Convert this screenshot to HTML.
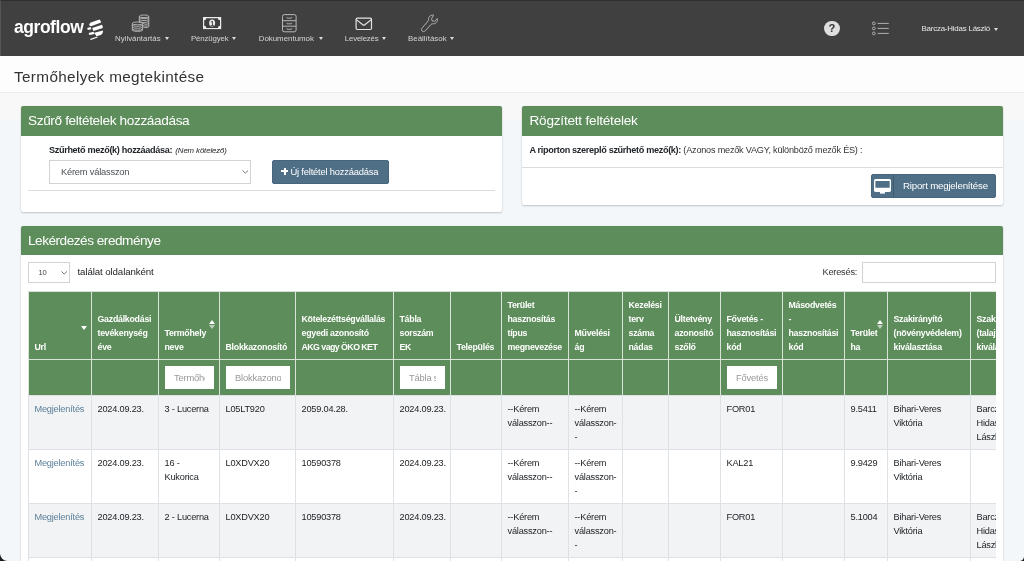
<!DOCTYPE html>
<html lang="hu">
<head>
<meta charset="utf-8">
<title>Termőhelyek megtekintése</title>
<style>
*{box-sizing:border-box;margin:0;padding:0}
html,body{width:1024px;height:561px;overflow:hidden;background:#1c1c1c}
body{font-family:"Liberation Sans",sans-serif;font-size:9.2px;letter-spacing:-.2px;color:#212529;position:relative}
#win{will-change:transform;position:absolute;left:0;top:0;width:1024px;height:561px;background:#f3f7fa;border-radius:0 0 4.5px 7.5px;overflow:hidden}
#nav{position:absolute;left:0;top:0;width:1024px;height:56px;background:#404040;border-top:1px solid #2e2e2e;border-left:1px solid #555}
#nav .it{position:absolute;top:33px;height:10px;line-height:10px;font-size:7.9px;letter-spacing:0;color:#d4d4d4;white-space:nowrap}
#nav .car{position:absolute;width:0;height:0;border-left:2.7px solid transparent;border-right:2.7px solid transparent;border-top:3px solid #dcdcdc;margin-left:-.3px}
#nav svg{position:absolute;overflow:visible}
#logo{position:absolute;left:13px;top:14px;font-size:17.5px;font-weight:700;letter-spacing:-.45px;color:#fff;line-height:24px;white-space:nowrap}
#user{position:absolute;left:920.5px;top:22.2px;font-size:7.9px;letter-spacing:-.2px;color:#e8e8e8;line-height:12px;white-space:nowrap}
#title{position:absolute;left:0;top:56px;width:1024px;height:37px;background:#fdfdfd;border-bottom:1px solid #ebebeb}
#title h1{position:absolute;left:14px;top:12.2px;font-size:15.3px;letter-spacing:.35px;font-weight:400;color:#333;line-height:18px;white-space:nowrap}
#fade{position:absolute;left:0;top:93px;width:1024px;height:27px;background:linear-gradient(#f8f8f8 0,#f8f8f8 25.500px,#f3f7fa 27px)}
.panel{position:absolute;background:#fff;border-radius:2px;box-shadow:0 0 1px rgba(0,0,0,.125),0 1px 2px rgba(0,0,0,.2)}
.panel .hd{position:absolute;left:0;top:0;right:0;height:29.5px;background:#5c8d5a;border-radius:2px 2px 0 0;color:#fff;font-size:13.6px;letter-spacing:-.35px;line-height:29px;padding-left:7.5px;white-space:nowrap}
.abs{position:absolute;white-space:nowrap}
.btn{position:absolute;background:#4f6f86;border:1px solid #48667b;border-radius:2px;color:#fff;white-space:nowrap}
.sel,.inp{position:absolute;background:#fff;border:1px solid #d3d3d3;border-radius:0;color:#495057;white-space:nowrap}
.chev{position:absolute;width:4.5px;height:4.5px;border-right:1px solid #555;border-bottom:1px solid #555;transform:rotate(45deg)}

#tw{position:absolute;left:7px;top:64.500px;width:968px;height:340px;overflow:hidden}
#tb{border-collapse:separate;border-spacing:0;table-layout:fixed;width:1014px}
#tb th,#tb td{border-left:1px solid #dee2e6;border-top:1px solid #dee2e6;padding:6px 0 5.5px 5.5px;line-height:14px;text-align:left;white-space:nowrap;overflow:hidden;position:relative}
#tb th{background:#5c8d5a;color:#fff;font-weight:700;font-size:8.8px;letter-spacing:-.25px;height:67px;padding-bottom:5px;vertical-align:bottom;border-color:#d9e3d8}
#tb tr.f td{background:#5c8d5a;height:36.500px;padding:6px 5px 0 5.500px;border-top:1.5px solid #d9e3d8;border-left-color:#d9e3d8;vertical-align:top}
#tb tbody td{height:54px;padding-top:6.400px;padding-bottom:4.100px;vertical-align:top}
#tb tbody tr:nth-child(odd) td{background:#f2f3f4}
#tb tbody tr:nth-child(even) td{background:#fff}
#tb a{color:#5b7f98}
.fi{height:23px;background:#fff;border-radius:0;overflow:hidden;padding:0 9px 0 9.500px;line-height:23px;color:#999;font-size:9.400px}
.fi span{display:block;overflow:hidden}
.sd,.sb{position:absolute;right:4px}
.sd{top:34.500px;width:0;height:0;border-left:3px solid transparent;border-right:3px solid transparent;border-top:4.200px solid #fff}
.sb{top:28.400px;width:6px;height:10px;right:4px}
.sb:before,.sb:after{content:"";position:absolute;left:0;width:0;height:0;border-left:3px solid transparent;border-right:3px solid transparent}
.sb:before{top:0;border-bottom:4.600px solid #fff}
.sb:after{top:5.200px;border-top:4.600px solid rgba(255,255,255,.6)}
</style>
</head>
<body>
<div id="win">
<div id="nav">
<div id="logo">agroflow</div>

<svg id="lg" style="left:-1px;top:-1px" width="110" height="56" viewBox="0 0 110 56"><g fill="#fff"><path d="M89.100 25.300 C89.300 24 89.800 23.100 90.800 22.500 L99.500 19.600 C100.300 20.400 100.900 21.400 101.200 22.600 L91 26.300 Z"/><path d="M92.100 27.900 L102 24.700 C102.600 25.700 102.800 26.800 102.800 27.900 L93.500 30.900 Z"/><path d="M87.200 28.100 L90.700 27 L91.300 29.200 L87.800 30.100 Z"/><path d="M94.300 32.700 L103.100 30.400 C103 31.600 102.700 32.600 102.300 33.400 C101.600 34.400 100.800 35 100 35.300 L96.400 36.200 Z"/><path d="M88.700 33 L93.500 31.800 L94.700 34 L89.300 35.100 Z"/><path d="M90 39.100 L97.200 36.600 L97.600 37.500 L90.800 40.100 Z"/><path d="M90.500 36.500 L95 35.300 L95.300 36 L90.800 37.200Z" opacity=".0"/></g></svg>

<svg style="left:-1px;top:-1px" width="160" height="40" viewBox="0 0 160 40" fill="none" stroke="#c2c2c2" stroke-width=".85"><ellipse cx="144.05" cy="16.3" rx="4.75" ry="1.3"/><path d="M139.30 16.300V22.300M148.80 16.300V26.600"/><path d="M139.30 17.60C140.80 18.95 147.30 18.95 148.80 17.60M139.30 19.55C140.80 20.90 147.30 20.90 148.80 19.55M139.30 21.50C140.80 22.85 147.30 22.85 148.80 21.50M143.20 23.45C144.70 24.53 147.30 24.53 148.80 23.45M143.20 25.40C144.70 26.48 147.30 26.48 148.80 25.40M143.20 26.90C144.70 27.98 147.30 27.98 148.80 26.90"/><ellipse cx="137.45" cy="23.400" rx="5.15" ry="1.350"/><path d="M132.30 23.400V30.200M142.60 23.400V30.200"/><path d="M132.30 25.30C133.80 26.65 141.10 26.65 142.60 25.30M132.30 27.25C133.80 28.60 141.10 28.60 142.60 27.25M132.30 29.20C133.80 30.55 141.10 30.55 142.60 29.20M132.30 30.40C133.80 31.75 141.10 31.75 142.60 30.40"/></svg>
<div class="it" style="left:114px">Nyilvántartás</div><i class="car" style="left:164px;top:36.3px"></i>

<svg style="left:202px;top:16px" width="19" height="13" viewBox="0 0 19 13"><rect x="0" y="0" width="18.200" height="12.100" fill="#ececec"/><path d="M3.300 1.200h11.600a2.100 2.100 0 0 0 2.100 2.100v5.500a2.100 2.100 0 0 0-2.100 2.100H3.300a2.100 2.100 0 0 0-2.100-2.100V3.300a2.100 2.100 0 0 0 2.100-2.100z" fill="#404040"/><ellipse cx="9.100" cy="6.050" rx="3" ry="3.500" fill="#ececec"/><text x="9.100" y="8.500" font-size="7" font-weight="700" text-anchor="middle" fill="#404040" font-family="Liberation Sans,sans-serif" letter-spacing="0">1</text></svg>
<div class="it" style="left:190px;letter-spacing:-.18px">Pénzügyek</div><i class="car" style="left:231.500px;top:36.3px"></i>

<svg style="left:281px;top:13px" width="15" height="19" viewBox="0 0 15 19" fill="none" stroke="#c4c4c4" stroke-width=".9"><rect x=".5" y=".6" width="13.600" height="17.200" rx="1.800"/><path d="M.5 6.700h13.600M.5 12.200h13.600"/><path d="M4.800 3.200l.5 1h4l.5-1M4.800 8.800l.5 1h4l.5-1M4.800 14.300l.5 1h4l.5-1" stroke-width=".8"/></svg>
<div class="it" style="left:257.700px">Dokumentumok</div><i class="car" style="left:318px;top:36.3px"></i>

<svg style="left:354px;top:16px" width="18" height="14" viewBox="0 0 18 14" fill="none" stroke="#e4e4e4" stroke-width="1.200"><rect x="1.100" y="1.100" width="15.400" height="11.400" rx="1.200"/><path d="M1.300 2.600l6.500 5.200c.6.500 1.400.5 2 0l6.500-5.200"/></svg>
<div class="it" style="left:343.800px;letter-spacing:-.2px">Levelezés</div><i class="car" style="left:381px;top:36.3px"></i>

<svg style="left:420px;top:13px" width="18" height="19" viewBox="0 0 18 19" fill="none" stroke="#bdbdbd" stroke-width=".9" stroke-linejoin="round"><path d="M12.600 1.200c-2.600-.6-5.400 1.300-5.100 4.600.05.500-.1.900-.4 1.200L1.200 13.900c-.9 1-.9 2.300-.1 3.100.9.900 2.200.8 3.100-.1l6.100-6.700c.3-.3.700-.5 1.200-.4 3.200.4 5.500-2.300 4.800-5.200l-2.800 2.800-2.400-.5-.5-2.400z"/></svg>
<div class="it" style="left:407px">Beállítások</div><i class="car" style="left:449px;top:36.3px"></i>

<div style="position:absolute;left:823.300px;top:19.800px;width:15.300px;height:15.300px;border-radius:50%;background:#dfdfdf;color:#333;font-weight:700;font-size:11.200px;line-height:15.800px;text-align:center;letter-spacing:0">?</div>
<svg style="left:871px;top:20px" width="18" height="14" viewBox="0 0 18 14" fill="none" stroke="#c4c4c4" stroke-width=".8"><circle cx="1.800" cy="2.400" r="1.400"/><circle cx="1.800" cy="7.400" r="1.400"/><circle cx="1.800" cy="12.400" r="1.400"/><path d="M5.600 2.400h11.200M5.600 7.400h11.200M5.600 12.400h11.200" stroke-width=".85"/></svg>
<div id="user">Barcza-Hidas László</div><i class="car" style="left:993.500px;top:26.600px"></i>
</div>
<div id="title"><h1>Termőhelyek megtekintése</h1></div>
<div id="fade"></div>

<div class="panel" id="p1" style="left:21px;top:106px;width:481px;height:106px">
 <div class="hd" style="padding-left:7px">Szűrő feltételek hozzáadása</div>
 <div class="abs" style="left:28px;top:37.300px;line-height:14px;font-weight:700;font-size:9.1px;letter-spacing:-.33px">Szűrhető mező(k) hozzáadása: <span style="font-weight:400;font-style:italic;font-size:7.8px;letter-spacing:-.1px;margin-left:1px">(Nem kötelező)</span></div>
 <div class="sel" style="left:28px;top:54px;width:202px;height:24px;line-height:22px;padding-left:11px;font-size:9.3px">Kérem válasszon<svg style="position:absolute;right:1.400px;top:9.300px" width="6.600" height="3.800" viewBox="0 0 7 4"><path d="M.5.5l3 2.800 3-2.800" fill="none" stroke="#555" stroke-width=".85"/></svg></div>
 <div class="btn" style="left:251px;top:54px;width:116.500px;height:23.500px;line-height:22px;padding-left:17.500px;font-size:9.400px"><span style="position:absolute;left:8px;top:6.500px;width:7.400px;height:7.400px;background:linear-gradient(#fff,#fff) center/2px 100% no-repeat,linear-gradient(#fff,#fff) center/100% 2px no-repeat"></span>Új feltétel hozzáadása</div>
 <div class="abs" style="left:7px;top:84.300px;width:467px;height:1px;background:#dcdcdc"></div>
</div>

<div class="panel" id="p2" style="left:522px;top:106px;width:481px;height:99px">
 <div class="hd" style="letter-spacing:-.22px">Rögzített feltételek</div>
 <div class="abs" style="left:7.5px;top:37.300px;line-height:14px;font-size:9.1px"><b style="letter-spacing:-.32px">A riporton szereplő szűrhető mező(k):</b> <span style="color:#333">(Azonos mezők VAGY, különböző mezők ÉS) :</span></div>
 <div class="abs" style="left:0;top:61px;width:481px;height:1px;background:#dcdcdc"></div>
 <div class="btn" style="left:349px;top:68.2px;width:125px;height:23.6px;line-height:22px;padding-left:31px;font-size:9.7px">
  <span style="position:absolute;left:21.400px;top:0;width:1px;height:100%;background:#40596c"></span>
  <svg style="position:absolute;left:2px;top:3.900px" width="17" height="15" viewBox="0 0 17 15"><rect x="0" y="0" width="17" height="12.900" rx="1.600" fill="#fff"/><rect x="1.400" y="1.900" width="14.300" height="6.900" rx=".3" fill="#4f6f86"/><rect x="6" y="12.500" width="4.900" height="2.100" fill="#fff"/></svg>
  Riport megjelenítése</div>
</div>

<div class="panel" id="p3" style="left:21px;top:226px;width:982px;height:400px">
 <div class="hd" style="letter-spacing:-.48px;padding-left:7px;height:29px;line-height:30px">Lekérdezés eredménye</div>
 <div class="sel" style="left:7px;top:36px;width:41.500px;height:21px;line-height:20px;padding-left:9.500px;font-size:7.600px;letter-spacing:-.3px;color:#444">10<svg style="position:absolute;right:1.600px;top:8px" width="6.400" height="3.700" viewBox="0 0 7 4"><path d="M.5.5l3 2.800 3-2.800" fill="none" stroke="#555" stroke-width=".9"/></svg></div>
 <div class="abs" style="left:56.500px;top:39.300px;line-height:14px;font-size:9.700px;letter-spacing:-.1px">találat oldalanként</div>
 <div class="abs" style="left:801.5px;top:39.2px;line-height:14px;color:#333">Keresés:</div>
 <div class="inp" style="left:841px;top:36px;width:134px;height:21px"></div>
<div id="tw"><table id="tb"><colgroup><col style="width:63px"><col style="width:67px"><col style="width:61px"><col style="width:76px"><col style="width:98px"><col style="width:57px"><col style="width:51px"><col style="width:67px"><col style="width:54px"><col style="width:46px"><col style="width:52px"><col style="width:62px"><col style="width:62px"><col style="width:43px"><col style="width:83px"><col style="width:72px"></colgroup>
<thead><tr class="h">
<th>Url<i class="sd"></i></th>
<th>Gazdálkodási<br>tevékenység<br>éve</th>
<th>Termőhely<br>neve<i class="sb"></i></th>
<th>Blokkazonosító</th>
<th>Kötelezéttségvállalás<br>egyedi azonosító<br><span style="letter-spacing:-.55px">AKG vagy ÖKO KET</span></th>
<th>Tábla<br>sorszám<br>EK</th>
<th>Település</th>
<th>Terület<br>hasznosítás<br>típus<br>megnevezése</th>
<th>Művelési<br>ág</th>
<th>Kezelési<br>terv<br>száma<br>nádas</th>
<th>Ültetvény<br>azonosító<br>szőlő</th>
<th>Fővetés -<br>hasznosítási<br>kód</th>
<th>Másodvetés<br>-<br>hasznosítási<br>kód</th>
<th>Terület<br>ha<i class="sb"></i></th>
<th>Szakirányító<br>(növényvédelem)<br>kiválasztása</th>
<th>Szakirányító<br>(talajvédelem)<br>kiválasztása</th>
</tr><tr class="f">
<td></td>
<td></td>
<td><div class="fi"><span>Termőhely neve</span></div></td>
<td><div class="fi"><span>Blokkazonosító</span></div></td>
<td></td>
<td><div class="fi"><span>Tábla sorszám</span></div></td>
<td></td>
<td></td>
<td></td>
<td></td>
<td></td>
<td><div class="fi"><span>Fővetés</span></div></td>
<td></td>
<td></td>
<td></td>
<td></td>
</tr></thead><tbody>
<tr>
<td><a>Megjelenítés</a></td>
<td>2024.09.23.</td>
<td>3 - Lucerna</td>
<td>L05LT920</td>
<td>2059.04.28.</td>
<td>2024.09.23.</td>
<td></td>
<td>--Kérem<br>válasszon--</td>
<td>--Kérem<br>válasszon-<br>-</td>
<td></td>
<td></td>
<td>FOR01</td>
<td></td>
<td>9.5411</td>
<td>Bihari-Veres<br>Viktória</td>
<td>Barcza-<br>Hidas<br>László</td>
</tr>
<tr>
<td><a>Megjelenítés</a></td>
<td>2024.09.23.</td>
<td>16 -<br>Kukorica</td>
<td>L0XDVX20</td>
<td>10590378</td>
<td>2024.09.23.</td>
<td></td>
<td>--Kérem<br>válasszon--</td>
<td>--Kérem<br>válasszon-<br>-</td>
<td></td>
<td></td>
<td>KAL21</td>
<td></td>
<td>9.9429</td>
<td>Bihari-Veres<br>Viktória</td>
<td></td>
</tr>
<tr>
<td><a>Megjelenítés</a></td>
<td>2024.09.23.</td>
<td>2 - Lucerna</td>
<td>L0XDVX20</td>
<td>10590378</td>
<td>2024.09.23.</td>
<td></td>
<td>--Kérem<br>válasszon--</td>
<td>--Kérem<br>válasszon-<br>-</td>
<td></td>
<td></td>
<td>FOR01</td>
<td></td>
<td>5.1004</td>
<td>Bihari-Veres<br>Viktória</td>
<td>Barcza-<br>Hidas<br>László</td>
</tr>
<tr>
<td><a>Megjelenítés</a></td>
<td>2024.09.23.</td>
<td>5 - Búza</td>
<td>L0XDVX20</td>
<td>10590378</td>
<td>2024.09.23.</td>
<td></td>
<td>--Kérem<br>válasszon--</td>
<td>--Kérem<br>válasszon-<br>-</td>
<td></td>
<td></td>
<td>KAL01</td>
<td></td>
<td>7.2210</td>
<td>Bihari-Veres<br>Viktória</td>
<td></td>
</tr>
</tbody></table></div>
</div>
</div>
</body>
</html>
